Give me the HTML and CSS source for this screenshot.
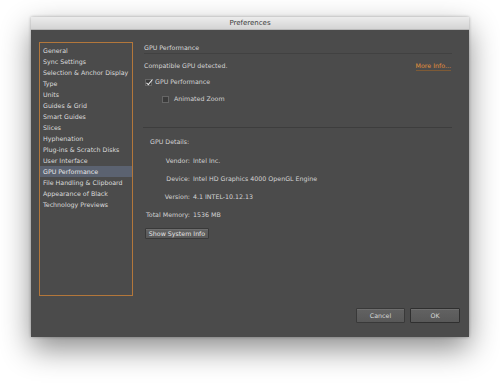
FILE: index.html
```html
<!DOCTYPE html>
<html lang="en">
<head>
    <meta charset="UTF-8">
    <meta name="viewport" content="width=device-width, initial-scale=1.0">
    <title>Preferences</title>
    <link rel="stylesheet" href="styles.css">
</head>
<body>
    <div class="window">
        <div class="titlebar">Preferences</div>

        <div class="window-body">
            <!-- Список разделов -->
            <ul class="sidebar">
                <li>General</li>
                <li>Sync Settings</li>
                <li>Selection &amp; Anchor Display</li>
                <li>Type</li>
                <li>Units</li>
                <li>Guides &amp; Grid</li>
                <li>Smart Guides</li>
                <li>Slices</li>
                <li>Hyphenation</li>
                <li>Plug-ins &amp; Scratch Disks</li>
                <li>User Interface</li>
                <li class="active">GPU Performance</li>
                <li>File Handling &amp; Clipboard</li>
                <li>Appearance of Black</li>
                <li>Technology Previews</li>
            </ul>

            <!-- Панель GPU -->
            <div class="panel">
                <div class="panel-title">GPU Performance</div>

                <div class="row detected">
                    <span>Compatible GPU detected.</span>
                    <a class="more-link">More Info...</a>
                </div>

                <label class="check-row">
                    <span class="checkbox checked"></span>
                    GPU Performance
                </label>
                <label class="check-row sub">
                    <span class="checkbox"></span>
                    Animated Zoom
                </label>

                <div class="divider"></div>

                <div class="details-title">GPU Details:</div>
                <div class="detail first">
                    <span class="detail-label">Vendor:</span>
                    <span>Intel Inc.</span>
                </div>
                <div class="detail">
                    <span class="detail-label">Device:</span>
                    <span>Intel HD Graphics 4000 OpenGL Engine</span>
                </div>
                <div class="detail">
                    <span class="detail-label">Version:</span>
                    <span>4.1 INTEL-10.12.13</span>
                </div>
                <div class="detail">
                    <span class="detail-label">Total Memory:</span>
                    <span>1536 MB</span>
                </div>

                <button class="btn small">Show System Info</button>
            </div>
        </div>

        <div class="footer">
            <button class="btn">Cancel</button>
            <button class="btn default">OK</button>
        </div>
    </div>
</body>
</html>
```

FILE: styles.css
```css
html, body {
    height: 100%;
}

body {
    margin: 0;
    min-height: 383px;
    background: #fff;
    font-family: "DejaVu Sans", Verdana, sans-serif;
    font-size: 6.3px;
    color: #d4d4d4;
}

.window {
    width: 438px;
    height: 320px;
    margin: 17px 0 0 31px;
    background: #4b4b4b;
    box-shadow: 0 12px 28px rgba(0,0,0,0.45), 0 0 3px rgba(0,0,0,0.3);
    display: flex;
    flex-direction: column;
}

.titlebar {
    height: 12px;
    line-height: 12px;
    text-align: center;
    font-size: 7px;
    color: #3a3a3a;
    background: linear-gradient(#ececec, #d4d4d4);
    border-bottom: 1px solid #b9b9b9;
}

.window-body {
    display: flex;
    padding: 12px 17px 0 8px;
}

.sidebar {
    list-style: none;
    margin: 0;
    padding: 2px 0 0;
    width: 92px;
    height: 250px;
    border: 1px solid #b3773b;
    flex-shrink: 0;
}

.sidebar li {
    height: 11px;
    line-height: 11px;
    padding-left: 3px;
    white-space: nowrap;
    color: #dcdcdc;
}

.sidebar li.active {
    background: #5b6270;
    color: #e8e8e8;
}

.panel {
    flex: 1;
    margin-left: 11px;
    padding-top: 1px;
    display: flex;
    flex-direction: column;
    align-items: flex-start;
}

.panel-title {
    align-self: stretch;
    line-height: 10px;
    border-bottom: 1px solid #414141;
    color: #dadada;
}

.row {
    align-self: stretch;
    display: flex;
    justify-content: space-between;
    line-height: 10px;
}

.detected {
    margin-top: 7px;
}

.more-link {
    color: #e4913c;
    border-bottom: 1px solid #7d5a36;
    line-height: 9px;
    margin-right: 1px;
}

.check-row {
    display: flex;
    align-items: center;
    gap: 3px;
    line-height: 10px;
    margin-top: 6px;
    margin-left: 1px;
}

.check-row.sub {
    margin-top: 7px;
    margin-left: 18px;
    gap: 5px;
}

.checkbox {
    width: 5px;
    height: 5px;
    background: #3b3b3b;
    border: 1px solid #666;
    position: relative;
}

.checkbox.checked::after {
    content: "";
    position: absolute;
    left: 2px;
    top: -2px;
    width: 2px;
    height: 6px;
    border: solid #ececec;
    border-width: 0 1px 1px 0;
    transform: rotate(40deg);
}

.divider {
    align-self: stretch;
    height: 1px;
    background: #3d3d3d;
    margin-top: 23px;
    margin-left: -1px;
}

.details-title {
    margin-top: 9px;
    margin-left: 6px;
    line-height: 10px;
}

.detail {
    display: flex;
    gap: 3px;
    line-height: 10px;
    margin-top: 8px;
    white-space: nowrap;
}

.detail.first {
    margin-top: 9px;
}

.detail-label {
    width: 46px;
    display: flex;
    justify-content: flex-end;
}

.btn {
    font-family: inherit;
    font-size: 6.3px;
    color: #d8d8d8;
    background: linear-gradient(#626262, #585858);
    border: 1px solid #393939;
    border-radius: 1px;
    padding: 0;
    height: 15px;
    width: 49px;
    box-shadow: inset 0 1px 0 rgba(255,255,255,0.08);
}

.btn.small {
    width: 64px;
    height: 11px;
    line-height: 9px;
    margin-top: 8px;
    margin-left: 1px;
    color: #e4e4e4;
}

.btn.default {
    border-color: #2f2f2f;
    width: 50px;
}

.footer {
    display: flex;
    justify-content: flex-end;
    gap: 5px;
    margin-top: 12px;
    padding-right: 9px;
}
```
